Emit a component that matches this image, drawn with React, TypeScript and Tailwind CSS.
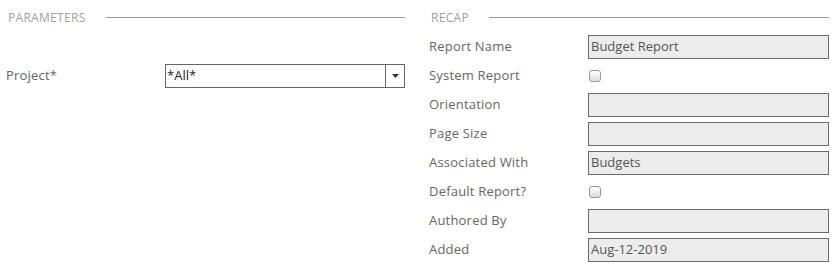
import React from "react";

const font = { fontFamily: '"Open Sans", "Liberation Sans", sans-serif' };

function Heading({ title }: { title: string }) {
  return (
    <div className="flex items-center h-[35px]">
      <span className="ml-[2px] text-[12px] tracking-[0.3px] text-[#a0a0a0] leading-none">{title}</span>
      <div className="flex-1 ml-[20px] h-px bg-[#9a9a9a]" />
    </div>
  );
}

function TextRow({ label, value }: { label: string; value?: string }) {
  return (
    <div className="flex items-center h-[24px]">
      <div className="w-[159px] shrink-0 text-[13px] tracking-[0.2px] text-[#666]">{label}</div>
      <div className="w-[241px] h-[24px] border border-[#6b6b6b] bg-[#ececec] flex items-center pl-[2px] text-[13px] text-[#555]">
        {value}
      </div>
    </div>
  );
}

function CheckRow({ label }: { label: string }) {
  return (
    <div className="flex items-center h-[24px]">
      <div className="w-[159px] shrink-0 text-[13px] tracking-[0.2px] text-[#666]">{label}</div>
      <div className="ml-[1px] w-[12px] h-[12px] rounded-[3px] border border-[#9a9a9a] bg-gradient-to-b from-[#ffffff] to-[#dcdcdc]" />
    </div>
  );
}

export default function App() {
  return (
    <div className="w-[838px] h-[276px] bg-white flex pl-[6px] gap-[24px]" style={font}>
      <div className="w-[399px] shrink-0 flex flex-col">
        <Heading title="PARAMETERS" />
        <div className="h-[29px]" />
        <div className="flex items-center h-[24px]">
          <div className="w-[159px] shrink-0 text-[13px] tracking-[0.2px] text-[#666]">Project*</div>
          <div className="w-[240px] h-[24px] border border-[#666] bg-white flex">
            <div className="flex-1 flex items-center pl-[1px] text-[13px] text-[#222]">*All*</div>
            <div className="w-[19px] border-l border-[#666] flex items-center justify-center">
              <svg width="7" height="4" viewBox="0 0 7 4">
                <polygon points="0,0 7,0 3.5,4" fill="#333" />
              </svg>
            </div>
          </div>
        </div>
      </div>
      <div className="w-[400px] shrink-0 flex flex-col">
        <Heading title="RECAP" />
        <div className="flex flex-col gap-[5px]">
          <TextRow label="Report Name" value="Budget Report" />
          <CheckRow label="System Report" />
          <TextRow label="Orientation" />
          <TextRow label="Page Size" />
          <TextRow label="Associated With" value="Budgets" />
          <CheckRow label="Default Report?" />
          <TextRow label="Authored By" />
          <TextRow label="Added" value="Aug-12-2019" />
        </div>
      </div>
    </div>
  );
}
